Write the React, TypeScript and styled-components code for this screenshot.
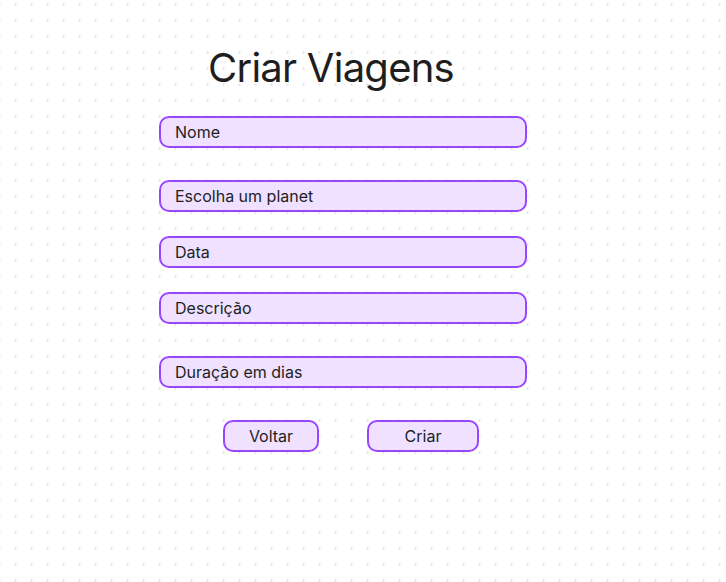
import styled, { createGlobalStyle } from "styled-components";

const GlobalStyle = createGlobalStyle`
  body {
    margin: 0;
    font-family: Inter, "Noto Sans", sans-serif;
    background-color: #ffffff;
  }
`;

const Page = styled.main`
  width: 726px;
  height: 582px;
  box-sizing: border-box;
  padding: 44px 0 0 159px;
  background-color: #ffffff;
  background-image: radial-gradient(circle, #dedede 1px, transparent 1.3px);
  background-size: 16px 16px;
  background-position: 7.5px -3.5px;
`;

const Form = styled.form`
  display: flex;
  flex-direction: column;
  width: 368px;
`;

const Title = styled.h1`
  margin: 0 0 24px 49px;
  font-size: 40px;
  line-height: 48px;
  font-weight: 400;
  color: #1e1e1e;
  letter-spacing: -0.75px;
`;

const Field = styled.input<{ $gap: number }>`
  box-sizing: border-box;
  width: 368px;
  height: 32px;
  margin: 0 0 ${(p) => p.$gap}px 0;
  padding: 0 14px;
  border: 2px solid #9747ff;
  border-radius: 10px;
  background: #efe1ff;
  font-family: Inter, "Noto Sans", sans-serif;
  font-size: 16px;
  color: #1e1e1e;
  outline: none;

  &::placeholder {
    color: #1e1e1e;
    opacity: 1;
  }
`;

const Actions = styled.div`
  display: flex;
  gap: 48px;
  padding-left: 64px;
`;

const Button = styled.button<{ $width: number }>`
  box-sizing: border-box;
  width: ${(p) => p.$width}px;
  height: 32px;
  border: 2px solid #9747ff;
  border-radius: 10px;
  background: #efe1ff;
  font-family: Inter, "Noto Sans", sans-serif;
  font-size: 16px;
  color: #1e1e1e;
  cursor: pointer;
`;

const fields = [
  { label: "Nome", gap: 32 },
  { label: "Escolha um planet", gap: 24 },
  { label: "Data", gap: 24 },
  { label: "Descrição", gap: 32 },
  { label: "Duração em dias", gap: 32 },
];

const App = () => {
  return (
    <>
      <GlobalStyle />
      <Page>
        <Form onSubmit={(e) => e.preventDefault()}>
          <Title>Criar Viagens</Title>
          {fields.map((f) => (
            <Field key={f.label} placeholder={f.label} $gap={f.gap} />
          ))}
          <Actions>
            <Button type="button" $width={96}>
              Voltar
            </Button>
            <Button type="submit" $width={112}>
              Criar
            </Button>
          </Actions>
        </Form>
      </Page>
    </>
  );
};

export default App;
